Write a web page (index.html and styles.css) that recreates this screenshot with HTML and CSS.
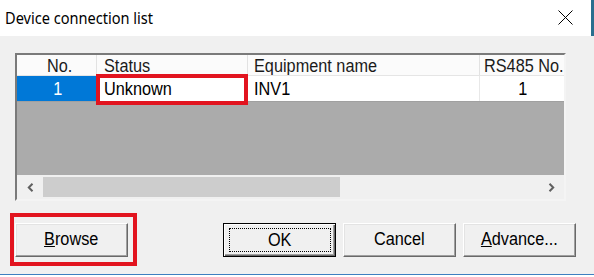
FILE: index.html
```html
<!DOCTYPE html>
<html>
<head>
<meta charset="utf-8">
<link rel="stylesheet" href="styles.css">
</head>
<body>
<div class="window">
  <div class="titlebar">
    <span class="title"><span class="sq-title">Device connection list</span></span>
    <svg class="close" width="15" height="15" viewBox="0 0 15 15"><path d="M0.5 0.5 L14.5 14.5 M14.5 0.5 L0.5 14.5" stroke="#000" stroke-width="1" fill="none"/></svg>
  </div>
  <div class="content">
    <div class="list">
      <div class="row header">
        <div class="cell c-no center"><span class="sq sq-c">No.</span></div>
        <div class="cell c-status"><span class="sq">Status</span></div>
        <div class="cell c-name"><span class="sq">Equipment name</span></div>
        <div class="cell c-rs"><span class="sq">RS485 No.</span></div>
      </div>
      <div class="row data">
        <div class="cell c-no center selected"><span class="sq sq-c">1</span></div>
        <div class="cell c-status marked"><span class="sq">Unknown</span><span class="mark mark-status"></span></div>
        <div class="cell c-name"><span class="sq">INV1</span></div>
        <div class="cell c-rs center"><span class="sq sq-c">1</span></div>
      </div>
      <div class="workspace"></div>
      <div class="hscroll">
        <div class="arrow"><svg width="7" height="9" viewBox="0 0 7 9"><path d="M5.5 0.8 L1.8 4.5 L5.5 8.2" stroke="#606060" stroke-width="2" fill="none"/></svg></div>
        <div class="track"><div class="thumb"></div></div>
        <div class="arrow"><svg width="7" height="9" viewBox="0 0 7 9"><path d="M1.5 0.8 L5.2 4.5 L1.5 8.2" stroke="#606060" stroke-width="2" fill="none"/></svg></div>
      </div>
    </div>
    <div class="buttons">
      <div class="btn-wrap">
        <button class="btn"><span class="sq sq-c"><u>B</u>rowse</span></button>
        <span class="mark mark-browse"></span>
      </div>
      <div class="btn-group">
        <button class="btn default"><span class="focus"><span class="sq sq-c">OK</span></span></button>
        <button class="btn"><span class="sq sq-c">Cancel</span></button>
        <button class="btn"><span class="sq sq-c"><u>A</u>dvance...</span></button>
      </div>
    </div>
  </div>
</div>
<div class="bottom-line"></div>
</body>
</html>
```

FILE: styles.css
```css
html, body {
  margin: 0;
  padding: 0;
  background: #ffffff;
}
.window {
  width: 594px;
  height: 274px;
  background: #f0f0f0;
  display: flex;
  flex-direction: column;
  font-family: "Liberation Sans", Arial, sans-serif;
  font-size: 17.5px;
  color: #000;
}
.sq {
  display: inline-block;
  transform: scaleX(0.93);
  transform-origin: left center;
  white-space: nowrap;
}
.sq-c {
  transform-origin: center center;
}
.titlebar {
  height: 36px;
  flex: none;
  background: #ffffff;
  display: flex;
  align-items: flex-start;
  justify-content: space-between;
  padding-left: 5px;
  padding-right: 18px;
  border-right: 3px solid #2a6f8f;
  box-sizing: border-box;
}
.title {
  font-family: "Noto Sans", "Open Sans", sans-serif;
  font-size: 16px;
  line-height: 22px;
  color: #000;
  margin-top: 7px;
}
.sq-title {
  display: inline-block;
  transform: scaleX(0.91);
  transform-origin: left center;
  white-space: nowrap;
}
.close {
  display: block;
  margin-top: 10px;
}
.content {
  padding: 17px 0 0 15px;
  display: flex;
  flex-direction: column;
}
.list {
  width: 551px;
  box-sizing: border-box;
  border: 2px solid;
  border-color: #7a7a7a #f4f4f4 #f4f4f4 #7a7a7a;
  box-shadow: inset 1px 1px 0 #696969;
  background: #ababab;
  display: flex;
  flex-direction: column;
}
.row {
  display: flex;
}
.cell {
  box-sizing: border-box;
  padding: 0 4px 0 7px;
  white-space: nowrap;
  overflow: hidden;
}
.center {
  text-align: center;
  padding: 0;
}
.c-no { width: 80px; }
.c-status { width: 151px; }
.c-name { width: 232px; }
.c-rs { width: 84px; }
.header {
  height: 20px;
  background: #fbfbfb;
  border-bottom: 1px solid #e5e5e5;
}
.header .cell {
  line-height: 18px;
  padding-top: 2px;
  border-right: 1px solid #e2e2e2;
  color: #1a1a1a;
}
.header .c-no { padding-left: 7px; }
.header .c-status { padding-left: 7px; }
.header .c-name { padding-left: 6px; }
.header .c-rs { padding-left: 4px; border-right: none; }
.data {
  height: 25px;
  background: #ffffff;
  border-bottom: 1px solid #a0a0a0;
}
.data .cell {
  line-height: 22px;
  padding-top: 2px;
  border-right: 1px solid #e8e8e8;
}
.data .c-status { padding-left: 7px; }
.data .c-name { padding-left: 6px; }
.data .c-no { padding-left: 3px; }
.data .c-rs { border-right: none; padding-left: 1px; }
.selected {
  background: #0078d7;
  color: #ffffff;
}
.marked {
  position: relative;
  overflow: visible;
}
.mark {
  position: absolute;
  border: 4px solid #e2141f;
  pointer-events: none;
}
.mark-status {
  left: -1px;
  right: -1px;
  top: -2px;
  bottom: -4px;
}
.workspace {
  height: 73px;
  background: #ababab;
}
.hscroll {
  height: 24px;
  background: #f0f0f0;
  display: flex;
  align-items: center;
}
.arrow {
  width: 26px;
  height: 24px;
  display: flex;
  align-items: center;
  justify-content: center;
}
.track {
  flex: 1;
  height: 24px;
  display: flex;
  align-items: center;
}
.thumb {
  width: 297px;
  height: 20px;
  background: #cdcdcd;
}
.buttons {
  margin-top: 22px;
  width: 561px;
  display: flex;
  justify-content: space-between;
}
.btn-group {
  display: flex;
  gap: 7px;
}
.btn-wrap {
  position: relative;
}
.mark-browse {
  left: -5px;
  top: -10px;
  right: -9px;
  bottom: -9px;
}
.btn {
  width: 113px;
  height: 34px;
  box-sizing: border-box;
  margin: 0;
  padding: 0 0 2px 0;
  font-family: "Liberation Sans", Arial, sans-serif;
  font-size: 17.5px;
  line-height: 20px;
  color: #000;
  background: #f0f0f0;
  border: 1px solid;
  border-color: #ffffff #696969 #696969 #ffffff;
  box-shadow: inset -1px -1px 0 #a0a0a0, inset 1px 1px 0 #e3e3e3;
  display: flex;
  align-items: center;
  justify-content: center;
}
.btn.default {
  border: 1px solid #000;
  box-shadow: inset 1px 1px 0 #ffffff, inset -1px -1px 0 #696969, inset -2px -2px 0 #a0a0a0;
  padding: 0;
}
.focus {
  box-sizing: border-box;
  width: 102px;
  height: 24px;
  border: 1px dotted #000;
  display: flex;
  align-items: center;
  justify-content: center;
  padding-bottom: 1px;
}
.bottom-line {
  width: 594px;
  height: 1px;
  background: #3e7fc0;
}
```
